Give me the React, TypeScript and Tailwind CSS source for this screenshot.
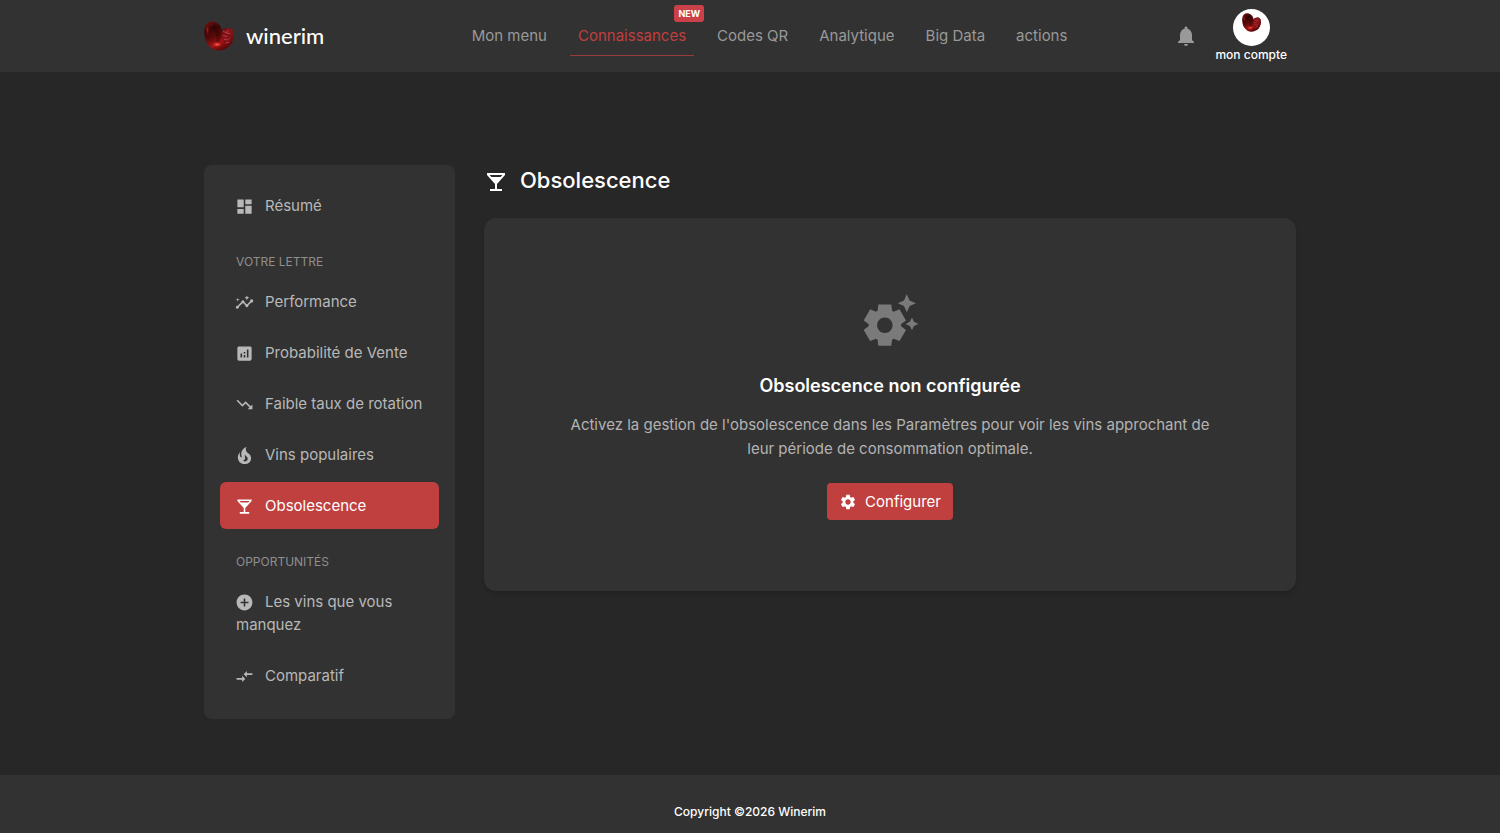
import type { ComponentType, ReactNode } from "react";
import {
  MdAddCircle,
  MdAnalytics,
  MdCompareArrows,
  MdDashboard,
  MdInsights,
  MdLocalBar,
  MdNotifications,
  MdSettings,
  MdSettingsSuggest,
  MdTrendingDown,
} from "react-icons/md";

function FlameIcon({ className }: { className?: string }) {
  return (
    <svg viewBox="2 2 20 20" fill="currentColor" className={className} aria-hidden="true">
      <path d="M17.660 11.200c-.23-.3-.51-.56-.77-.82-.67-.6-1.430-1.030-2.070-1.660C13.330 7.260 13 4.850 13.950 3c-.95.23-1.780.75-2.490 1.320-2.590 2.080-3.610 5.750-2.390 8.900.04.1.08.2.08.33 0 .22-.15.42-.35.5-.23.1-.47.04-.66-.12a.58.58 0 0 1-.14-.17c-1.130-1.430-1.310-3.480-.55-5.120C5.780 10 4.870 12.300 5 14.470c.06.5.12 1 .29 1.500.14.6.41 1.200.71 1.730 1.080 1.730 2.950 2.970 4.960 3.220 2.140.27 4.430-.12 6.070-1.600 1.830-1.660 2.470-4.320 1.530-6.600l-.13-.26c-.21-.46-.77-1.260-.77-1.260m-3.160 6.300c-.28.24-.74.5-1.100.6-1.120.4-2.240-.16-2.900-.82 1.190-.28 1.900-1.160 2.110-2.050.17-.8-.15-1.460-.28-2.230-.12-.74-.1-1.370.17-2.060.19.38.39.76.63 1.060.77 1 1.980 1.440 2.240 2.800.04.14.06.28.06.43.03.82-.33 1.720-.93 2.270z" />
    </svg>
  );
}

function WinerimMark({ id, className }: { id: string; className: string }) {
  const body = `${id}-body`;
  const lobe = `${id}-lobe`;
  const glow = `${id}-glow`;
  return (
    <svg viewBox="0 0 30 30" className={className} aria-hidden="true">
      <defs>
        <linearGradient id={body} x1="0" y1="0" x2="0.5" y2="1">
          <stop offset="0" stopColor="#7a1212" />
          <stop offset="0.3" stopColor="#3a0606" />
          <stop offset="0.55" stopColor="#5c0a0a" />
          <stop offset="0.8" stopColor="#a01414" />
          <stop offset="1" stopColor="#5c0909" />
        </linearGradient>
        <linearGradient id={lobe} x1="0" y1="0" x2="0.6" y2="1">
          <stop offset="0" stopColor="#6d1013" />
          <stop offset="0.5" stopColor="#84161a" />
          <stop offset="1" stopColor="#5a0a0a" />
        </linearGradient>
        <radialGradient id={glow}>
          <stop offset="0" stopColor="#ff6a58" />
          <stop offset="0.5" stopColor="#d02420" stopOpacity="0.7" />
          <stop offset="1" stopColor="#8f1212" stopOpacity="0" />
        </radialGradient>
      </defs>
      <path
        d="M7.500 .5C3 .5 .3 5 .3 11 .3 21 6 29 14.500 29.500 23.500 29.800 30 22.500 29.800 13.500 29.700 9 27.500 7 24.500 7 21.500 7 19.500 8.200 18.300 10 17.500 4.500 13 .5 7.500 .5Z"
        fill={`url(#${body})`}
      />
      <path
        d="M18.300 10C19.500 8.200 21.500 7 24.500 7 27.500 7 29.700 9 29.800 13.500 29.900 19 27.500 23.500 24 26.500 19 23 17.500 16 18.300 10Z"
        fill={`url(#${lobe})`}
      />
      <ellipse cx="13" cy="23.500" rx="6" ry="3.200" fill={`url(#${glow})`} />
      <ellipse cx="3.500" cy="9" rx="2" ry="6" fill={`url(#${glow})`} opacity="0.4" />
      <path
        d="M19.500 10.500l2.500 1M24 9l-1.500 3 3 .5M19.500 14.500l3 1M20.500 18.500l3 .5 2-2M22 22l3-1"
        stroke="#d8404a"
        strokeWidth="0.8"
        fill="none"
        strokeLinecap="round"
      />
      <path d="M10 6c4 4 5 9 4 13" stroke="#1b0202" strokeWidth="4" opacity="0.3" fill="none" strokeLinecap="round" />
    </svg>
  );
}

const navItems = [
  { label: "Mon menu" },
  { label: "Connaissances", active: true, isNew: true },
  { label: "Codes QR" },
  { label: "Analytique" },
  { label: "Big Data" },
  { label: "actions" },
];

function Header() {
  return (
    <header className="bg-[#323232]">
      <div className="mx-auto flex h-18 max-w-[1092px] items-center">
        <a href="#" className="flex items-center gap-3">
          <WinerimMark id="logo" className="size-[30px]" />
          <span className="font-[Lato,sans-serif] text-[22px] leading-7 font-medium text-white">
            winerim
          </span>
        </a>
        <nav className="ml-auto">
          <ul className="flex gap-[15px]">
            {navItems.map(({ label, active, isNew }) => (
              <li key={label} className="relative">
                <a
                  href="#"
                  aria-current={active ? "page" : undefined}
                  className={
                    active
                      ? "block border-b border-[#9a3a3a] px-2 py-[7px] text-[#c03f3f]"
                      : "block border-b border-transparent px-2 py-[7px] text-[#999999]"
                  }
                >
                  {label}
                </a>
                {isNew && (
                  <span className="absolute -top-3 -right-[10px] rounded-[3px] bg-[#cc4149] px-1 text-[9px] leading-[17px] font-bold text-white">
                    NEW
                  </span>
                )}
              </li>
            ))}
          </ul>
        </nav>
        <div className="ml-[99px] flex items-center gap-[17px] pr-[9px]">
          <button type="button" aria-label="Notifications">
            <MdNotifications className="size-6 text-[#999999]" />
          </button>
          <a
            href="#"
            className="flex flex-col items-center text-xs leading-[18px] font-medium text-white"
          >
            <span className="flex size-[37px] justify-center rounded-full bg-white pt-1">
              <WinerimMark id="avatar" className="size-[19px]" />
            </span>
            mon compte
          </a>
        </div>
      </div>
    </header>
  );
}

type SideLinkProps = {
  icon: ComponentType<{ className?: string }>;
  children: ReactNode;
  active?: boolean;
};

function SideLink({ icon: Icon, children, active }: SideLinkProps) {
  return (
    <li className="mb-1">
      <a
        href="#"
        aria-current={active ? "page" : undefined}
        className={
          active
            ? "block rounded-md bg-[#c03f3f] px-4 py-3 leading-[23px] text-white"
            : "block rounded-md px-4 py-3 leading-[23px] text-[#b8b8b8]"
        }
      >
        <Icon className="mr-[11px] -ml-px inline size-[19px]" />
        {children}
      </a>
    </li>
  );
}

function SideHeading({ children }: { children: ReactNode }) {
  return (
    <h2 className="px-4 pt-5 pb-2 text-xs leading-[17px] text-[#8f8f8f] uppercase">{children}</h2>
  );
}

function Sidebar() {
  return (
    <aside className="w-[251px] shrink-0 rounded-lg bg-[#323232] px-4 pt-[17px] pb-4">
      <ul>
        <SideLink icon={MdDashboard}>Résumé</SideLink>
      </ul>
      <SideHeading>Votre lettre</SideHeading>
      <ul>
        <SideLink icon={MdInsights}>Performance</SideLink>
        <SideLink icon={MdAnalytics}>Probabilité de Vente</SideLink>
        <SideLink icon={MdTrendingDown}>Faible taux de rotation</SideLink>
        <SideLink icon={FlameIcon}>Vins populaires</SideLink>
        <SideLink icon={MdLocalBar} active>
          Obsolescence
        </SideLink>
      </ul>
      <SideHeading>Opportunités</SideHeading>
      <ul>
        <SideLink icon={MdAddCircle}>Les vins que vous manquez</SideLink>
        <SideLink icon={MdCompareArrows}>Comparatif</SideLink>
      </ul>
    </aside>
  );
}

export default function App() {
  return (
    <div className="flex min-h-screen flex-col bg-[#272727] font-[Inter,sans-serif] text-[15px] leading-6">
      <Header />
      <main className="mx-auto flex w-full max-w-[1092px] grow items-start gap-[29px] pt-[93px] pb-14">
        <Sidebar />
        <section className="min-w-0 grow">
          <h1 className="flex items-center gap-3 text-[22px] leading-[30px] font-medium text-white">
            <MdLocalBar className="mt-1 size-6" />
            Obsolescence
          </h1>
          <div className="mt-[23px] flex flex-col items-center rounded-xl bg-[#323232] px-20 py-[71px] text-center shadow-md">
            <MdSettingsSuggest className="size-[62px] text-[#7a7a7a]" />
            <h2 className="mt-[21px] text-lg leading-7 font-semibold text-white">
              Obsolescence non configurée
            </h2>
            <p className="mt-[13px] text-[#b3b3b3]">
              Activez la gestion de l'obsolescence dans les Paramètres pour voir les vins approchant de
              leur période de consommation optimale.
            </p>
            <button
              type="button"
              className="mt-[22px] flex items-center gap-2 rounded bg-[#c03f3f] px-3 py-[6px] leading-[25px] text-white"
            >
              <MdSettings className="size-[18px]" />
              Configurer
            </button>
          </div>
        </section>
      </main>
      <footer className="bg-[#323232] pt-[27px] pb-3 text-center text-xs leading-5 font-medium text-white">
        Copyright ©2026 Winerim
      </footer>
    </div>
  );
}
